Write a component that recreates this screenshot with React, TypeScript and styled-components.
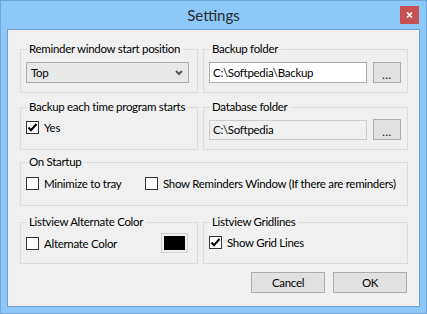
import React from "react";
import styled, { createGlobalStyle } from "styled-components";

const GlobalStyle = createGlobalStyle`
  html, body {
    margin: 0;
    padding: 0;
    background: #ffffff;
  }
  * {
    box-sizing: border-box;
  }
`;

const Frame = styled.div`
  width: 427px;
  height: 314px;
  display: flex;
  flex-direction: column;
  background: #8cc8f8;
  border: 1px solid #72a6d8;
  font-family: Lato, "Liberation Sans", sans-serif;
  font-size: 11.5px;
  letter-spacing: -0.3px;
  color: #000;
`;

const TitleBar = styled.div`
  height: 28px;
  display: grid;
  grid-template-columns: 1fr auto 1fr;
  align-items: start;
`;

const Title = styled.div`
  grid-column: 2;
  padding-top: 5px;
  font-size: 15px;
  line-height: 18px;
  letter-spacing: 0;
  color: #2b2b2b;
`;

const CloseButton = styled.div`
  grid-column: 3;
  justify-self: end;
  margin: 5px 7px 0 0;
  width: 19px;
  height: 18px;
  background: #c75050;
  display: flex;
  align-items: center;
  justify-content: center;
`;

const Content = styled.div`
  flex: 1;
  margin: 0 6px 6px;
  background: #f0f0f0;
  border: 1px solid #6e9fd0;
  padding: 11px 11px 0 12px;
  display: flex;
  flex-direction: column;
`;

const Grid = styled.div`
  display: grid;
  grid-template-columns: 178px 205px;
  column-gap: 5px;
`;

const Group = styled.fieldset<{ $span?: boolean; $top?: number; $pt?: number; $pb?: number }>`
  margin: ${(p) => p.$top ?? 0}px 0 0;
  padding: ${(p) => p.$pt ?? 5}px 6px ${(p) => p.$pb ?? 9}px 5px;
  border: 1px solid #dcdcdc;
  min-width: 0;
  grid-column: ${(p) => (p.$span ? "1 / span 2" : "auto")};
`;

const Legend = styled.legend`
  margin-left: 1px;
  padding: 0 3px 0 2px;
  line-height: 16px;
  height: 16px;
  white-space: nowrap;
`;

const Row = styled.div<{ $gap?: number }>`
  display: flex;
  align-items: center;
  gap: ${(p) => p.$gap ?? 6}px;
`;

const Select = styled.div`
  width: 163px;
  height: 21px;
  background: #e8e8e8;
  border: 1px solid #acacac;
  display: flex;
  align-items: center;
  justify-content: space-between;
  padding: 0 5px 0 4px;
`;

const TextBox = styled.div<{ $disabled?: boolean }>`
  width: 158px;
  height: ${(p) => (p.$disabled ? 20 : 21)}px;
  background: ${(p) => (p.$disabled ? "#f0f0f0" : "#ffffff")};
  border: 1px solid ${(p) => (p.$disabled ? "#cccccc" : "#abadb3")};
  display: flex;
  align-items: center;
  padding: 0 3px;
  white-space: nowrap;
`;

const Button = styled.div<{ $w?: number }>`
  width: ${(p) => p.$w ?? 28}px;
  height: 21px;
  background: #e1e1e1;
  border: 1px solid #adadad;
  display: flex;
  align-items: center;
  justify-content: center;
  white-space: nowrap;
`;

const Dots = styled.span`
  font-size: 11px;
  line-height: 11px;
  padding-top: 3px;
  letter-spacing: 0.5px;
`;

const CheckLabel = styled.label<{ $width?: number }>`
  display: flex;
  align-items: center;
  gap: 5px;
  height: 16px;
  flex: none;
  width: ${(p) => (p.$width ? `${p.$width}px` : "auto")};
  white-space: nowrap;
`;

const Box = styled.span`
  width: 13px;
  height: 13px;
  border: 1px solid #333333;
  background: #ffffff;
  display: flex;
  align-items: center;
  justify-content: center;
  flex: none;
`;

const Swatch = styled.div`
  width: 27px;
  height: 20px;
  border: 1px solid #cfcfcf;
  padding: 2px;
  margin-left: auto;
  margin-right: 3px;
`;

const SwatchFill = styled.div`
  width: 100%;
  height: 100%;
  background: #000;
`;

const Footer = styled.div`
  display: flex;
  justify-content: flex-end;
  gap: 8px;
  margin-top: 8px;
  padding-right: 1px;
`;

const Check = ({ checked, label, width }: { checked?: boolean; label: string; width?: number }) => (
  <CheckLabel $width={width}>
    <Box>
      {checked && (
        <svg width="11" height="11" viewBox="0 0 11 11">
          <path d="M1.5 5.5 L4 8.2 L9.5 2" fill="none" stroke="#000" strokeWidth="2" />
        </svg>
      )}
    </Box>
    {label}
  </CheckLabel>
);

const App = () => {
  return (
    <>
      <GlobalStyle />
      <Frame>
        <TitleBar>
          <Title>Settings</Title>
          <CloseButton>
            <svg width="7" height="6" viewBox="0 0 7 6">
              <path d="M1 0.5 L6 5.5 M6 0.5 L1 5.5" stroke="#fff" strokeWidth="1.6" />
            </svg>
          </CloseButton>
        </TitleBar>
        <Content>
          <Grid>
            <Group>
              <Legend>Reminder window start position</Legend>
              <Select>
                <span>Top</span>
                <svg width="8" height="6" viewBox="0 0 8 6">
                  <path d="M1 1 L4 4 L7 1" fill="none" stroke="#555" strokeWidth="2" />
                </svg>
              </Select>
            </Group>
            <Group>
              <Legend>Backup folder</Legend>
              <Row>
                <TextBox>C:\Softpedia\Backup</TextBox>
                <Button>
                  <Dots>...</Dots>
                </Button>
              </Row>
            </Group>
            <Group $top={6} $pt={4} $pb={14}>
              <Legend>Backup each time program starts</Legend>
              <Check checked label="Yes" />
            </Group>
            <Group $top={6} $pt={4} $pb={9}>
              <Legend>Database folder</Legend>
              <Row>
                <TextBox $disabled>C:\Softpedia</TextBox>
                <Button>
                  <Dots>...</Dots>
                </Button>
              </Row>
            </Group>
            <Group $span $top={4} $pt={5} $pb={14}>
              <Legend>On Startup</Legend>
              <Row $gap={0}>
                <Check label="Minimize to tray" width={119} />
                <Check label="Show Reminders Window (If there are reminders)" />
              </Row>
            </Group>
            <Group $top={8} $pt={3} $pb={10}>
              <Legend>Listview Alternate Color</Legend>
              <Row>
                <Check label="Alternate Color" />
                <Swatch>
                  <SwatchFill />
                </Swatch>
              </Row>
            </Group>
            <Group $top={8} $pt={4} $pb={13}>
              <Legend>Listview Gridlines</Legend>
              <Check checked label="Show Grid Lines" />
            </Group>
          </Grid>
          <Footer>
            <Button $w={74}>Cancel</Button>
            <Button $w={74}>OK</Button>
          </Footer>
        </Content>
      </Frame>
    </>
  );
};

export default App;
